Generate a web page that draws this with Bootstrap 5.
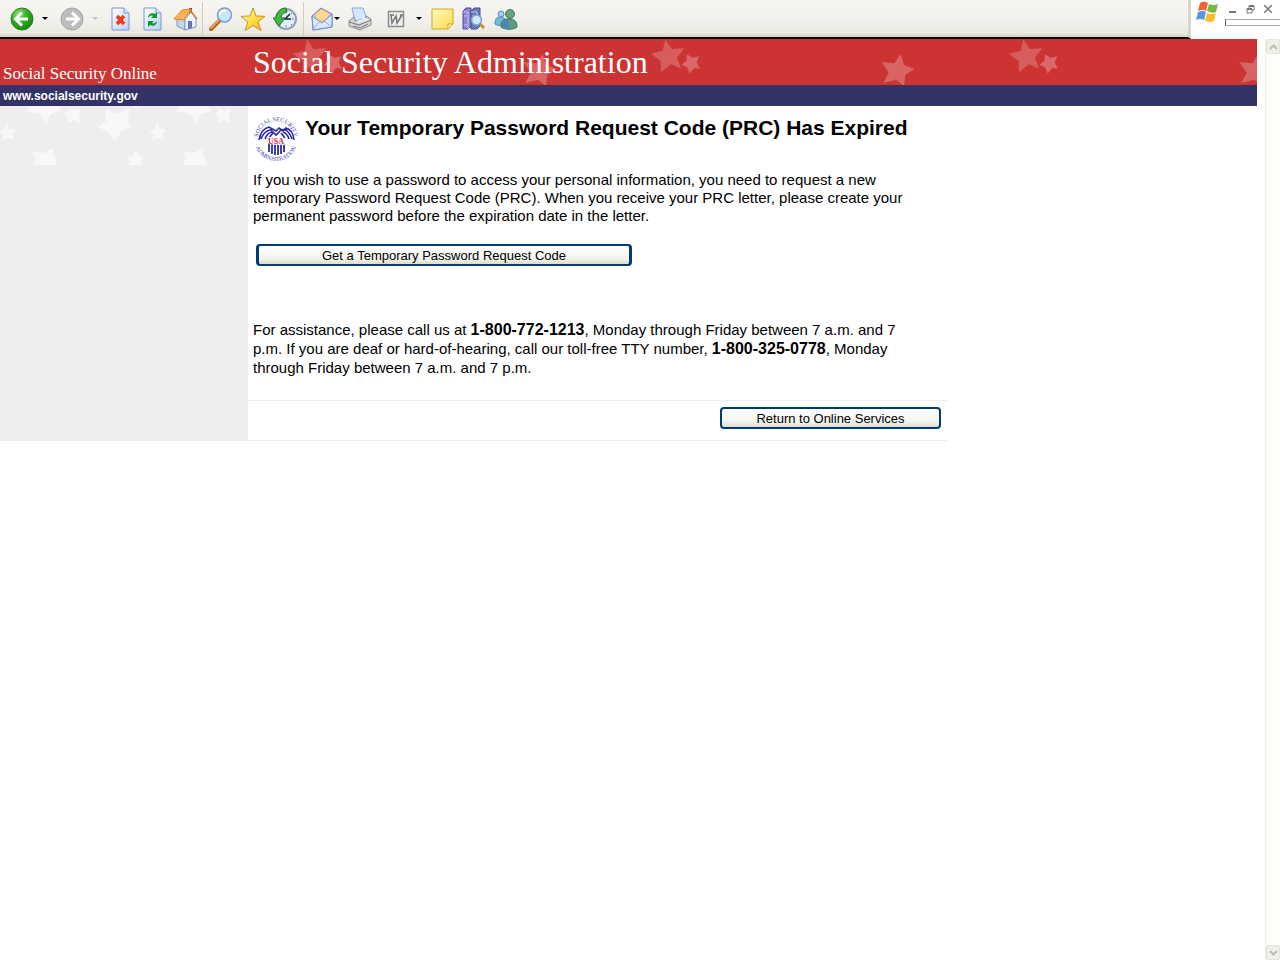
<!DOCTYPE html>
<html lang="en">
<head>
<meta charset="utf-8">
<meta name="viewport" content="width=device-width, initial-scale=1">
<title>Social Security Online</title>
<link rel="stylesheet" href="https://cdn.jsdelivr.net/npm/bootstrap@5.3.0/dist/css/bootstrap.min.css">
<style>
body{font-family:"Liberation Sans",Arial,sans-serif;font-size:15px;line-height:18px;color:#000;background:#fff}
b{font-size:16px}
button{font-family:inherit;color:#000}
.browser-bar{height:39px}
.tools{background:linear-gradient(#f7f6f2,#f1f0ea 60%,#e9e8df 90%,#d8d6c8 97%);border-bottom:2px solid #000;border-right:3px solid #d8d6c8;padding-left:6px}
.tool{width:32px;height:37px;padding:0;border:0;background:none;display:flex;align-items:center;justify-content:center;flex:none}
.tool svg{width:24px;height:24px}
.tool-mail{width:24px}
.tool.caret{width:14px}
.tool.caret-narrow{width:6px}
.tool.caret svg{width:6px;height:3px}
.divider{width:1px;margin:2px 2px 0;background:#d0cdb8;height:35px}
.win{width:89px}
.win-btn{border:0;background:none;padding:0;display:flex}
.win-row{height:18px}
.address{height:7px;width:55px;border:1px solid #aaa;border-right:0;border-left-color:#555;margin-top:1px}
.red{background:#c33;height:46px}
.blue{background:#336;height:21px}
.side{width:248px}
.serif{font-family:"Liberation Serif","Times New Roman",serif;color:#fff}
.site{font-size:17px;line-height:20px;padding:0 0 1px 3px}
.agency{font-size:32px;line-height:46px;padding-left:5px}
.stars{position:absolute;inset:0;width:100%;height:100%}
.domain{font-size:12px;line-height:22px;padding-left:3px;font-weight:bold;color:#fff;text-decoration:none}
.sidebar{background:#eee}
.main-col{width:700px}
.copy{padding:8px 26px 23px 5px}
.seal{overflow:visible}
.title{font-size:21px;line-height:24px;font-weight:bold;margin:2px 0 0 4px;white-space:nowrap}
.help{line-height:19px;margin:54px 0 0}
.xp{height:22px;border:2px solid #003c74;border-radius:4px;background:linear-gradient(#fff,#f3f3ee 70%,#dedbd2);font-size:13px;line-height:17px;padding:0}
.xp-request{width:376px;margin:19px 0 0 3px;border-left-width:3px;border-right-width:3px}
.xp-return{width:221px}
.actions{border-top:1px solid #eee;border-bottom:1px solid #eee;height:41px;padding:6px 7px}
.scroll{width:15px;background:#fefefb;border-left:1px solid #eeede5}
.scroll button{width:14px;height:15px;border:1px solid #e6e5da;border-radius:2px;background:#f0efe8;padding:0;display:flex;align-items:center;justify-content:center}
</style>
</head>
<body>
<div class="d-flex flex-column min-vh-100">
<header class="browser-bar d-flex">
  <div class="tools d-flex flex-grow-1" role="toolbar" aria-label="Browser">
    <button class="tool" aria-label="Back"><svg viewBox="0 0 24 24"><defs><radialGradient id="gr" cx=".35" cy=".25" r=".8"><stop stop-color="#8be070"/><stop offset=".5" stop-color="#35ad24"/><stop offset="1" stop-color="#168412"/></radialGradient></defs><circle cx="12" cy="12" r="11" fill="url(#gr)" stroke="#23831d"/><path d="M12 5.500 5.500 12l6.500 6.500M6 12h12" fill="none" stroke="#fff" stroke-width="3"/></svg></button>
    <button class="tool caret" aria-label="Back list"><svg viewBox="0 0 6 3"><path d="M0 0h6L3 3z"/></svg></button>
    <button class="tool ms-1" aria-label="Forward"><svg viewBox="0 0 24 24"><circle cx="12" cy="12" r="11" fill="#bdbdbd" stroke="#a4a4a4"/><path d="M12 5.500 18.500 12 12 18.500M18 12H6" fill="none" stroke="#fff" stroke-width="3"/></svg></button>
    <button class="tool caret" aria-label="Forward list"><svg viewBox="0 0 6 3"><path d="M0 0h6L3 3z" fill="#c0c0c0"/></svg></button>
    <button class="tool ms-1" aria-label="Stop"><svg viewBox="0 0 24 24"><defs><linearGradient id="pg" x2="1" y2="1"><stop stop-color="#fff"/><stop offset="1" stop-color="#b6d0fb"/></linearGradient></defs><path d="M2 1h12l5 5v17H2z" fill="url(#pg)" stroke="#7d96cf"/><path d="M14 1v5h5" fill="#dce8ff" stroke="#7d96cf"/><path d="m7 9 7 8M14 9l-7 8" stroke="#f23b12" stroke-width="3.500"/></svg></button>
    <button class="tool" aria-label="Refresh"><svg viewBox="0 0 24 24"><path d="M2 1h12l5 5v17H2z" fill="url(#pg)" stroke="#7d96cf"/><path d="M14 1v5h5" fill="#dce8ff" stroke="#7d96cf"/><path d="M6 11c0-4 4-6 7-4l2-2v6H9l2-2c-2-1-3 0-5 2zM15 14c0 4-4 6-7 4l-2 2v-6h6l-2 2c2 1 3 0 5-2z" fill="#0a9b20"/></svg></button>
    <button class="tool" aria-label="Home"><svg viewBox="0 0 24 24"><path d="M15 1h3v6h-3z" fill="#c9301d"/><path d="M3 11 11 13v10l-8-4z" fill="#c3d4ee" stroke="#8298bd"/><path d="m11 12 6-7 5 7v8l-11 3z" fill="#eef4ff" stroke="#8298bd"/><path d="M0 12 8 3l9-1-7 11z" fill="#ffb353" stroke="#e08a30"/><path d="m16 3 7 9" stroke="#d98443" stroke-width="1.500"/><path d="M14 14h4v7l-4 1z" fill="#6878a6"/></svg></button>
    <span class="divider ms-0"></span>
    <button class="tool" aria-label="Search"><svg viewBox="0 0 24 24"><path d="m10 14-8 8" stroke="#b45b18" stroke-width="4" stroke-linecap="round"/><path d="m10 13-8 8" stroke="#f1a04c" stroke-width="2" stroke-linecap="round"/><circle cx="15.500" cy="8" r="7" fill="#c4e7fc" stroke="#7c9bd4" stroke-width="1.500"/><path d="M11 8c0-3 3-5 6-4" stroke="#fff" stroke-width="2" fill="none"/></svg></button>
    <button class="tool" aria-label="Favorites"><svg viewBox="0 0 24 24"><defs><linearGradient id="yg" x2="1" y2="1"><stop stop-color="#fffbb4"/><stop offset=".5" stop-color="#ffe044"/><stop offset="1" stop-color="#f4ac13"/></linearGradient></defs><path d="m12 1 3 8 9 .3-7 5.700 3 8.500-8-5-8 5 3-8.500L0 9.300 9 9z" fill="url(#yg)" stroke="#c99516"/></svg></button>
    <button class="tool" aria-label="History"><svg viewBox="0 0 24 24"><circle cx="13" cy="12" r="10" fill="#dff1ff" stroke="#8ba0c0" stroke-width="2"/><path d="M13 4v2M13 18v2M19 12h2M18 17l1 1M18 7l1-1" stroke="#d85c3c"/><path d="m17 7-5 5h6" fill="none" stroke="#223" stroke-width="1.500"/><path d="M13 1C7 1 3 6 3 11H0l6 8 6-8H8c0-3 2-5 6-6z" fill="#45b641" stroke="#19791d"/></svg></button>
    <span class="divider"></span>
    <button class="tool tool-mail ms-1" aria-label="Mail"><svg viewBox="0 0 24 24"><path d="m2 9 9-8 11 6v13L3 23z" fill="#bcd5ff" stroke="#6580c4"/><path d="m5 8 6-6 9 5-5 7-8-1z" fill="#ffd894" stroke="#f3b964"/><path d="m2 9 10 7L22 7v13L3 23z" fill="#d8eaff" stroke="#6f8ccf"/><path d="m3 22 7-8M22 20l-8-6" stroke="#8fa8df"/></svg></button>
    <button class="tool caret caret-narrow" aria-label="Mail options"><svg viewBox="0 0 6 3"><path d="M0 0h6L3 3z"/></svg></button>
    <button class="tool ms-1" aria-label="Print"><svg viewBox="0 0 24 24"><path d="M4 1h11l4 11-12 2z" fill="#d5e8ff" stroke="#87a8e3"/><path d="m1 14 5-4 1 4 11-2v-3l5 3v6l-11 5L1 19z" fill="#d5d5d9" stroke="#8b8b91"/><path d="m1 15 10 3 12-5M5 19l7 2 8-4" stroke="#777" fill="none"/><path d="m8 14 10-3 3 2-10 3z" fill="#eee"/></svg></button>
    <button class="tool ms-1" aria-label="Edit with Word"><svg viewBox="0 0 24 24"><path d="M4.500 4.500h15v15h-15z" fill="#eee" stroke="#8b8b8b" stroke-width="1.500"/><path d="m7 8 1 8 4-7 1 7 5-8M6 8h4M16 8h3" stroke="#777" stroke-width="1.500" fill="none"/></svg></button>
    <button class="tool caret" aria-label="Edit options"><svg viewBox="0 0 6 3"><path d="M0 0h6L3 3z"/></svg></button>
    <button class="tool" aria-label="Note"><svg viewBox="0 0 24 24"><defs><linearGradient id="ng" x2="1" y2="1"><stop stop-color="#fffbc0"/><stop offset="1" stop-color="#ffd94f"/></linearGradient></defs><path d="M2 2h21v15l-5 5H2z" fill="url(#ng)" stroke="#d6a51d"/><path d="M23 17h-5v5z" fill="#fff4a2" stroke="#d6a51d"/></svg></button>
    <button class="tool" aria-label="Research"><svg viewBox="0 0 24 24"><path d="m1 4 3-3h5v18l-3 3H1z" fill="#8d83d2" stroke="#51469d"/><path d="m9 4 3-3h6v18l-3 3H9z" fill="#6979b5" stroke="#41558f"/><path d="M1 5h5v17M9 5h6v14M2 9h3M10 9h4M2 18h3" fill="none" stroke="#c8c2ef"/><path d="m18 17 4 4" stroke="#cc8c29" stroke-width="3"/><circle cx="14.500" cy="13" r="5" fill="#c9eaff" stroke="#7aa1cf" stroke-width="1.500"/></svg></button>
    <button class="tool" aria-label="Messenger"><svg viewBox="0 0 24 24"><path d="M1 17c0-6 2-7 6-7s5 3 5 7c-3 2-8 2-11 0z" fill="#75b8dc" stroke="#4a89b7"/><circle cx="7" cy="7" r="3" fill="#9fcdea" stroke="#5d93bb"/><path d="M7 20c0-7 3-8 8-8s8 2 8 8c-4 3-12 3-16 0z" fill="#5b9f78" stroke="#357568"/><path d="M8 20c0-5 2-7 6-7l2 8c-3 1-6 0-8-1z" fill="#4d84be"/><circle cx="16" cy="7" r="4.500" fill="#63a57d" stroke="#3a7470"/></svg></button>
  </div>
  <div class="win d-flex">
    <svg width="26" height="24" viewBox="0 0 26 24" class="ms-1"><path d="M5 3q4-3 8 0l-2 8q-4-2-8 0z" fill="#f06437"/><path d="M14 4q4 2 9 0l-2 8q-4 2-9-1z" fill="#79b842"/><path d="M3 12q4-2 8 0l-2 8q-4-2-8 0z" fill="#5697e3"/><path d="M12 13q4 2 9 0l-2 8q-4 3-9-1z" fill="#f7be2d"/></svg>
    <div class="d-flex flex-column flex-grow-1 ms-1">
      <div class="win-row d-flex justify-content-between align-items-center pe-2 ps-1">
        <button class="win-btn" aria-label="Minimize"><svg width="8" height="9"><path d="M0 6h7v2H0z" fill="#777"/></svg></button>
        <button class="win-btn" aria-label="Restore"><svg width="9" height="9"><path d="M3 3V1h5v4H6M1 4h5v4H1z" fill="none" stroke="#777"/><path d="M1 4h5M3 1h5" stroke="#777" stroke-width="2"/></svg></button>
        <button class="win-btn" aria-label="Close"><svg width="8" height="8"><path d="m0 0 8 8M8 0 0 8" stroke="#777" stroke-width="1.500"/></svg></button>
      </div>
      <div class="address"></div>
    </div>
  </div>
</header>
<div class="d-flex flex-grow-1">
  <div class="flex-grow-1 me-2">
    <div class="red d-flex">
      <div class="side serif site d-flex align-items-end">Social Security Online</div>
      <div class="serif agency position-relative flex-grow-1 overflow-hidden">
        <svg class="stars" aria-hidden="true"><defs><pattern id="bs" width="358" height="46" patternUnits="userSpaceOnUse"><g transform="translate(-104 -3) scale(.33333)" fill="#d75c5c"><path d="m490 10 19 29 38-2-22 28 13 33-31-13-30 24-1-34-29-22 35-9z"/><path d="m555 55 16 10 21-4-8 18 10 19-18-2-13 17-7-19-18-8 15-11z" fill="#db6868"/></g><g transform="translate(254 -3) scale(.33333)" fill="#d96464"><path d="m122 54 10 33 32 12-28 17-4 34-24-19-38 10 16-31-21-32 38 4z"/></g></pattern></defs><rect width="100%" height="46" fill="url(#bs)"/></svg>
        <span class="position-relative">Social Security Administration</span>
      </div>
    </div>
    <div class="blue d-flex"><a class="domain" href="#">www.socialsecurity.gov</a></div>
    <div class="d-flex">
      <aside class="side sidebar flex-shrink-0"><svg width="100%" height="59" class="d-block" aria-hidden="true"><defs><pattern id="ss" width="150" height="59" patternUnits="userSpaceOnUse"><g transform="scale(.33333)" fill="#f8f8f8"><path d="M92 0h84l10 14-34 10-14 29-18-29-40-8zM203 4l15 10 25-6-6 21 5 22-21-9-17 9-2-20-11-8 15-7zM315 8l32 16 43-16-8 42 16 12-32 12-23 31-22-30-29-11 26-18zM20 52l9 16 20 2-11 15 4 16-18-6-16 8 1-18L0 77l14-8zM470 52l9 16 20 2-11 15 4 16-18-6-16 8 1-18-12-8 14-8zM97 135l33 7 30-15v25l10 13v12H100l7-22zM407 132l10 16 17 5-11 12 2 12h-40l5-12-11-11 19-5zM390 0h36l-18 6z"/></g></pattern></defs><rect width="100%" height="59" fill="url(#ss)"/></svg></aside>
      <main class="main-col">
        <div class="copy">
          <div class="d-flex">
            <svg class="seal flex-shrink-0" width="48" height="49" viewBox="0 0 48 49" role="img" aria-label="Social Security Administration seal"><defs><path id="up" d="M5 25a18 18 0 0 1 36 0"/><path id="dn" d="M1 25a22 22 0 0 0 44 0"/></defs><g fill="#3c3cb4" font-size="6" font-family="Liberation Serif,serif"><text><textPath href="#up" startOffset="50%" text-anchor="middle">SOCIAL SECURITY</textPath></text><text><textPath href="#dn" startOffset="50%" text-anchor="middle">ADMINISTRATION</textPath></text></g><path d="M16 29v9M19 29v11M22 29v12M25 29v12M28 29v11M31 29v9" stroke="#2929a5" stroke-width="1.800"/><g fill="none" stroke="#2929a5" stroke-width="1.600"><path d="M6 26q2-11 10-13l7 4 3-3 4 3 3-3q7 2 8 12M8 25q3-8 9-9M12 25q2-6 7-7M15 25l5-6M39 25q-3-8-7-9M36 25q-2-6-6-7M32 24l-4-5M17 15l6 6 5-5 6-1"/></g><text x="23" y="30" text-anchor="middle" font-size="8" font-weight="bold" font-family="Liberation Serif,serif" fill="#e5224b" stroke="#fff" stroke-width="1.500" paint-order="stroke">USA</text></svg>
            <h1 class="title">Your Temporary Password Request Code (PRC) Has Expired</h1>
          </div>
          <p class="mt-2 mb-0">If you wish to use a password to access your personal information, you need to request a new temporary Password Request Code (PRC). When you receive your PRC letter, please create your permanent password before the expiration date in the letter.</p>
          <button class="xp xp-request d-block">Get a Temporary Password Request Code</button>
          <p class="help">For assistance, please call us at <b>1-800-772-1213</b>, Monday through Friday between 7 a.m. and 7 p.m. If you are deaf or hard-of-hearing, call our toll-free TTY number, <b>1-800-325-0778</b>, Monday through Friday between 7 a.m. and 7 p.m.</p>
        </div>
        <div class="actions d-flex justify-content-end"><button class="xp xp-return">Return to Online Services</button></div>
      </main>
    </div>
  </div>
  <div class="scroll d-flex flex-column justify-content-between">
    <button aria-label="Scroll up"><svg width="9" height="6"><path d="m1 5 3.500-3.500L8 5" fill="none" stroke="#bdbcb4" stroke-width="2"/></svg></button>
    <button aria-label="Scroll down"><svg width="9" height="6"><path d="m1 1 3.500 3.500L8 1" fill="none" stroke="#bdbcb4" stroke-width="2"/></svg></button>
  </div>
</div>
</div>
<script src="https://cdn.jsdelivr.net/npm/bootstrap@5.3.0/dist/js/bootstrap.bundle.min.js"></script>
</body>
</html>
